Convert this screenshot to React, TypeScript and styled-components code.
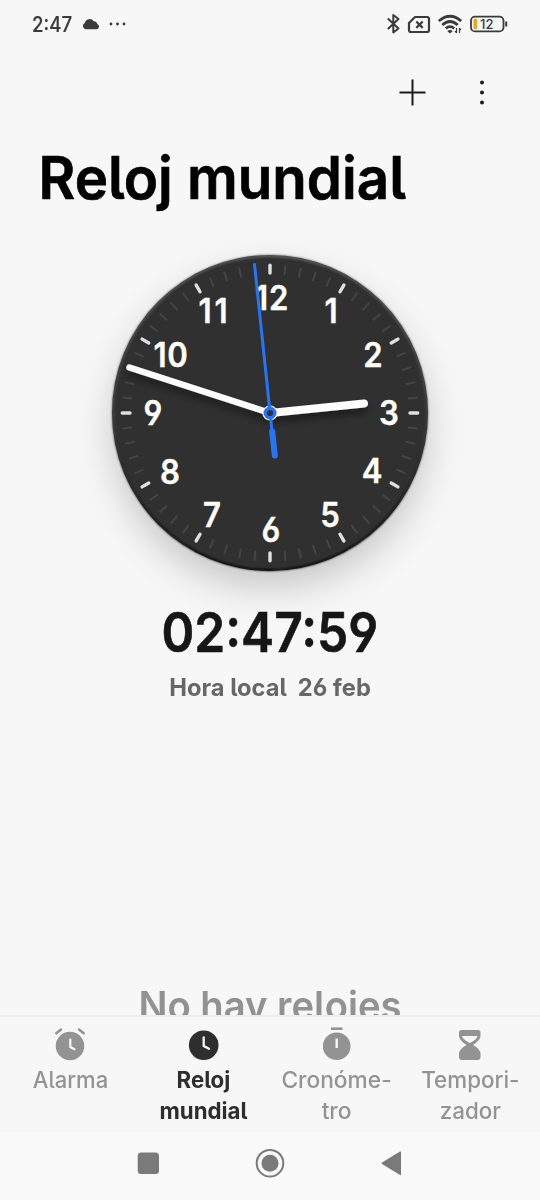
import React from "react";
import styled, { createGlobalStyle } from "styled-components";

const Global = createGlobalStyle`
  * { box-sizing: border-box; }
  body {
    margin: 0;
    background: #f7f7f7;
    font-family: Inter, "Noto Sans", sans-serif;
    font-feature-settings: "cv05" 1, "cv03" 1, "cv04" 1;
  }
`;

const Screen = styled.div`
  width: 540px;
  height: 1200px;
  display: flex;
  flex-direction: column;
  overflow: hidden;
  background: #f7f7f7;
`;

const StatusBar = styled.header`
  height: 48px;
  flex: none;
  display: flex;
  align-items: center;
  justify-content: space-between;
  padding: 0 30px 0 32px;
  color: #3b3b3b;
`;

const Clock = styled.span`
  width: 50px;
  font-size: 21px;
  font-weight: 500;
  line-height: 46px;
  padding-top: 2px;
  transform: scaleX(0.89);
  transform-origin: left;
  -webkit-text-stroke: 0.2px currentColor;
`;

const StatusGroup = styled.div`
  display: flex;
  align-items: center;
`;

const Actions = styled.nav`
  height: 89px;
  flex: none;
  display: flex;
  justify-content: flex-end;
  align-items: center;
  gap: 41px;
  padding-right: 44px;
`;

const Title = styled.h1`
  margin: 0;
  height: 103px;
  flex: none;
  padding-left: 40px;
  font-size: 58.5px;
  line-height: 82px;
  font-weight: 600;
  color: #000;
  white-space: nowrap;
  transform: scaleX(0.964);
  transform-origin: left;
  -webkit-text-stroke: 0.7px currentColor;
`;

const Dial = styled.svg`
  width: 540px;
  height: 360px;
  flex: none;
  display: block;
  overflow: visible;
`;

const Readout = styled.section`
  height: 388px;
  flex: none;
  display: flex;
  flex-direction: column;
  align-items: center;
`;

const Time = styled.div`
  height: 66px;
  line-height: 64px;
  font-size: 54.5px;
  font-weight: 600;
  color: #161616;
  white-space: nowrap;
  transform: scaleX(0.912);
  -webkit-text-stroke: 0.6px currentColor;
`;

const Place = styled.div`
  display: flex;
  gap: 11px;
  line-height: 43px;
  font-size: 24px;
  font-weight: 700;
  color: #676767;
  transform: scaleX(0.988);
`;

const Empty = styled.div`
  height: 27px;
  flex: none;
  overflow: hidden;
  text-align: center;
  font-size: 40px;
  line-height: 36px;
  font-weight: 600;
  color: #929292;
  transform: scaleX(0.955);
`;

const Tabs = styled.nav`
  height: 117px;
  flex: none;
  display: grid;
  grid-template-columns: repeat(4, 133.3px);
  padding: 10px 0 0 3.8px;
  border-top: 2px solid #ececec;
`;

const Tab = styled.div<{ $active?: boolean }>`
  display: flex;
  flex-direction: column;
  align-items: center;
  text-align: center;
  color: ${(p) => (p.$active ? "#2e2e2e" : "#939393")};
  font-size: 22.5px;
  line-height: 30.5px;
  font-weight: ${(p) => (p.$active ? 700 : 500)};
`;

const TabLabel = styled.span<{ $stretch: number }>`
  white-space: pre;
  transform: scaleX(${(p) => p.$stretch});
  margin-top: 4px;
`;

const SystemNav = styled.footer`
  height: 68px;
  flex: none;
  display: flex;
  justify-content: center;
  align-items: center;
  gap: 94px;
  padding-bottom: 6px;
  background: #f9f9f9;
`;

const numerals: [string, number, number][] = [
  ["12", 272, 298], ["1", 331, 311], ["2", 373, 355], ["3", 389, 413],
  ["4", 372, 471], ["5", 330, 515], ["6", 271, 530], ["7", 212, 515],
  ["8", 170, 472], ["9", 153, 413], ["10", 171, 355], ["11", 214.5, 311],
];

function ClockFace() {
  return (
    <Dial viewBox="0 240 540 360">
      <defs>
        <filter id="halo" x="-40%" y="-40%" width="180%" height="180%">
          <feGaussianBlur stdDeviation="22" />
        </filter>
        <filter id="hand" x="-20%" y="-80%" width="140%" height="300%">
          <feDropShadow dx="0" dy="5" stdDeviation="4" floodColor="#000" floodOpacity="0.5" />
        </filter>
        <linearGradient id="rim" x1="0" y1="0" x2="0" y2="1">
          <stop offset="0" stopColor="#666" />
          <stop offset="0.5" stopColor="#454545" />
          <stop offset="0.85" stopColor="#111" />
          <stop offset="1" stopColor="#000" />
        </linearGradient>
        <filter id="soft"><feGaussianBlur stdDeviation="0.8" /></filter>
      </defs>
      <circle cx="270" cy="430" r="153" fill="#000" opacity="0.24" filter="url(#halo)" />
      <circle cx="270" cy="413" r="158" fill="#303030" />
      <circle cx="270" cy="413" r="157" fill="none" stroke="url(#rim)" strokeWidth="1.8" filter="url(#soft)" />
      {Array.from({ length: 60 }, (_, i) => (
        <line
          key={i}
          x1="270" x2="270"
          y1={i % 5 ? 264.5 : 265.3} y2={i % 5 ? 274.5 : 273}
          stroke={i % 5 ? "#454545" : "#e0e0e0"}
          strokeWidth={i % 5 ? 2 : 3.4}
          strokeLinecap={i % 5 ? "butt" : "round"}
          transform={`rotate(${i * 6} 270 413)`}
        />
      ))}
      {numerals.map(([n, x, y]) => (
        <text
          key={n}
          textAnchor="middle" fontSize="33.5" fontWeight="600" fill="#fffefa"
          stroke="#fffefa" strokeWidth="0.4"
          letterSpacing={n === "11" ? 3 : n.length > 1 ? 0.8 : 0}
          transform={`translate(${x} ${y + 12.3}) scale(0.93 1)`}
        >
          {n}
        </text>
      ))}
      <g filter="url(#hand)" strokeLinecap="round" stroke="#fcfcfc">
        <line x1="270" y1="413" x2="364" y2="403.5" strokeWidth="8" />
        <line x1="270" y1="413" x2="129.5" y2="367.5" strokeWidth="6.5" />
      </g>
      <circle cx="270" cy="413" r="7.6" fill="#fcfcfc" />
      <g stroke="#2775f7" strokeLinecap="round">
        <line x1="254.5" y1="264.5" x2="272" y2="431" strokeWidth="3" />
        <line x1="272.2" y1="431.5" x2="274.8" y2="455.5" strokeWidth="6" />
      </g>
      <circle cx="270" cy="413" r="4.8" fill="#2b3340" stroke="#2775f7" strokeWidth="3.4" />
    </Dial>
  );
}

function StatusIcons() {
  return (
    <svg width="128" height="30" viewBox="382 9 128 30" fill="none" stroke="#3b3b3b">
      <path d="M387.8 18.5 398.5 28.5 393.3 32.5V15L398.5 19 387.8 29" strokeWidth="2" strokeLinejoin="round" />
      <path d="M415 17H427Q429 17 429 19V30Q429 32 427 32H411Q409 32 409 30V23Z" strokeWidth="2.2" strokeLinejoin="round" />
      <path d="m416.3 21.5 6.4 6.4m0-6.4-6.4 6.4" strokeWidth="2.2" />
      <path d="M438.8 21Q450 11.5 461.2 21M442.3 25Q450 18 457.7 25M445.8 28.5Q450 24.7 454.2 28.5" strokeWidth="2.8" />
      <path d="M447.2 31Q450 28.8 452.8 31L450 33.5Z" fill="#3b3b3b" stroke="none" />
      <path d="M456.5 28V33M459.5 28V33M455 31l1.5 2M461 30l-1.5-2" strokeWidth="1.2" />
      <rect x="471" y="16.7" width="32.5" height="14.7" rx="4" strokeWidth="1.8" />
      <path d="M474.5 18.8H477V29.3H474.5Q473.5 29.3 473.5 28.3V19.8Q473.5 18.8 474.5 18.8Z" fill="#efa42c" stroke="none" />
      <path d="M506.2 21.5V26.5" strokeWidth="2" />
      <text x="486.8" y="28.7" textAnchor="middle" fontSize="13" fontWeight="500" fill="#3b3b3b" stroke="none">12</text>
    </svg>
  );
}

const AlarmIcon = () => (
  <svg width="32" height="34" viewBox="54 1027 32 34">
    <circle cx="70" cy="1046" r="14.3" fill="#939393" />
    <path d="m56.3 1033.3 4.7-3.8M83.7 1033.3l-4.7-3.8" stroke="#939393" strokeWidth="2.5" strokeLinecap="round" />
    <path d="M70.3 1039.5V1047l4.2 2.3" fill="none" stroke="#f7f7f7" strokeWidth="2.2" strokeLinecap="round" />
  </svg>
);

const WorldIcon = () => (
  <svg width="32" height="34" viewBox="188 1027 32 34">
    <circle cx="203.7" cy="1045.3" r="14.8" fill="#2e2e2e" />
    <path d="M203.7 1037.5V1046l5.3 2.8" fill="none" stroke="#f7f7f7" strokeWidth="2.3" strokeLinecap="round" />
  </svg>
);

const StopwatchIcon = () => (
  <svg width="32" height="34" viewBox="321 1027 32 34">
    <circle cx="336.7" cy="1046.3" r="13.8" fill="#939393" />
    <path d="M331 1028.7H342.5" stroke="#939393" strokeWidth="2.6" />
    <path d="M336.7 1038.5V1048" stroke="#f7f7f7" strokeWidth="2.4" />
  </svg>
);

const HourglassIcon = () => (
  <svg width="32" height="34" viewBox="454 1027 32 34">
    <path d="M461.500 1030H478Q480.500 1030 480.500 1032.500V1036Q480.500 1040 473 1045Q480.500 1049 480.500 1054V1057Q480.500 1060 477.500 1060H462Q459 1060 459 1057V1054Q459 1049 466.500 1045Q459 1040 459 1036V1032.500Q459 1030 461.500 1030Z" fill="#939393" />
    <path d="M462 1036H477.500Q477 1039.500 469.800 1043Q462.500 1039.500 462 1036Z" fill="#f7f7f7" />
  </svg>
);

export default function App() {
  return (
    <Screen>
      <Global />
      <StatusBar>
        <StatusGroup>
          <Clock>2:47</Clock>
          <svg width="18" height="12" viewBox="0 0 18 12" fill="#3b3b3b">
            <path d="M3.5 11.2A3.3 3.3 0 0 1 2.8 5 5 5 0 0 1 11.8 3.2 3.3 3.3 0 0 1 15.2 6 2.7 2.7 0 0 1 14.8 11.2Z" />
          </svg>
          <svg width="28" height="6" viewBox="0 0 28 6" fill="#3b3b3b">
            <circle cx="11" cy="3" r="1.4" />
            <circle cx="17.5" cy="3" r="1.4" />
            <circle cx="24" cy="3" r="1.4" />
          </svg>
        </StatusGroup>
        <StatusIcons />
      </StatusBar>
      <Actions>
        <svg width="28" height="28" viewBox="0.5 0.5 28 28" stroke="#1b1b1b" strokeWidth="2"><path d="M14 1V27M1 14H27" /></svg>
        <svg width="28" height="28" viewBox="0 0.5 28 28" fill="#1b1b1b"><circle cx="14" cy="4" r="2" /><circle cx="14" cy="14" r="2" /><circle cx="14" cy="24" r="2" /></svg>
      </Actions>
      <Title>Reloj mundial</Title>
      <ClockFace />
      <Readout>
        <Time>02:47:59</Time>
        <Place><span>Hora local</span><span>26 feb</span></Place>
      </Readout>
      <Empty>No hay relojes</Empty>
      <Tabs>
        <Tab><AlarmIcon /><TabLabel $stretch={0.98}>Alarma</TabLabel></Tab>
        <Tab $active><WorldIcon /><TabLabel $stretch={0.99}>{"Reloj\nmundial"}</TabLabel></Tab>
        <Tab><StopwatchIcon /><TabLabel $stretch={1.01}>{"Cronóme-\ntro"}</TabLabel></Tab>
        <Tab><HourglassIcon /><TabLabel $stretch={0.995}>{"Tempori-\nzador"}</TabLabel></Tab>
      </Tabs>
      <SystemNav>
        <svg width="28" height="30" viewBox="0 0 28 30" fill="#7a7a7a"><rect x="4.7" y="4.6" width="21.3" height="21.3" rx="3.5" /></svg>
        <svg width="30" height="30" viewBox="0 0 30 30"><circle cx="15" cy="15.2" r="13.3" fill="none" stroke="#7a7a7a" strokeWidth="2" /><circle cx="15" cy="15.2" r="8.5" fill="#7a7a7a" /></svg>
        <svg width="28" height="30" viewBox="0 0 28 30" fill="#7a7a7a"><path d="M22 4Q22 3 21 3.6L3 14.4Q2 15.2 3 16L21 27Q22 27.5 22 26.5Z" /></svg>
      </SystemNav>
    </Screen>
  );
}
